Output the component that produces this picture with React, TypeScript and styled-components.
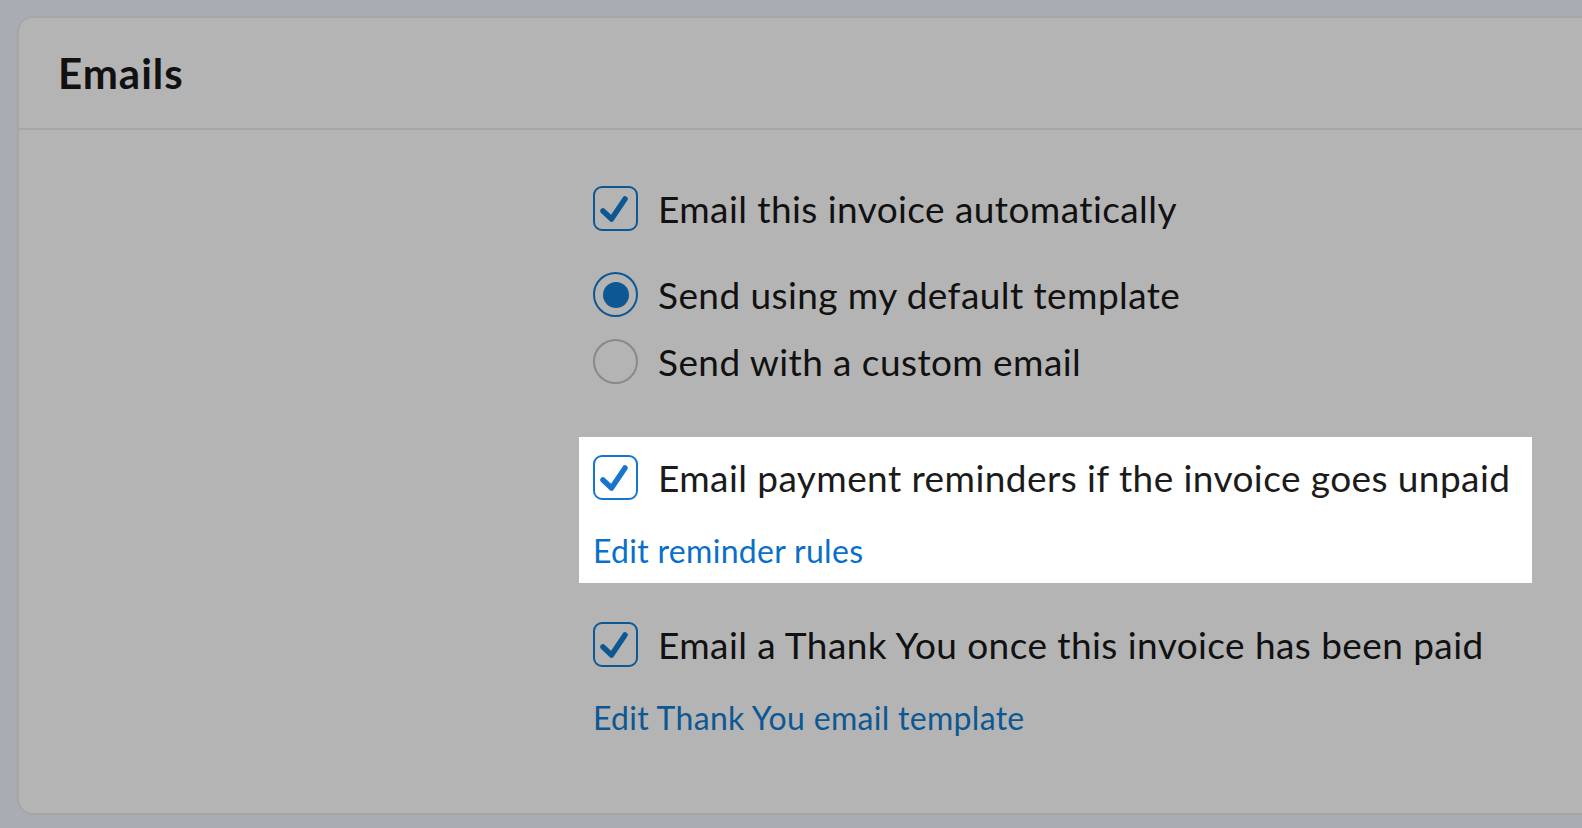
import React from 'react';
import styled, { createGlobalStyle } from 'styled-components';

const GlobalStyle = createGlobalStyle`
  html, body {
    margin: 0;
    padding: 0;
    background: #a9adb3;
    overflow: hidden;
  }
  body {
    font-family: Lato, "Noto Sans", sans-serif;
    color: #111;
  }
`;

const Page = styled.div`
  width: 1582px;
  height: 828px;
  padding: 16px 0 0 17px;
  box-sizing: border-box;
  overflow: hidden;
`;

const Card = styled.section`
  width: 1620px;
  background: #b4b4b4;
  border: 2px solid #a6a6a9;
  border-radius: 16px;
  box-sizing: border-box;
`;

const CardHeader = styled.header`
  height: 112px;
  display: flex;
  align-items: center;
  padding-left: 39px;
  border-bottom: 2px solid #a6a6a9;
  box-sizing: border-box;
`;

const Title = styled.h2`
  margin: 0;
  font-size: 42px;
  font-weight: 700;
  color: #111;
  letter-spacing: 1px;
`;

const CardBody = styled.div`
  padding: 56px 0 75px 574px;
`;

const Group = styled.div<{ $gap?: number; $top?: number }>`
  display: flex;
  flex-direction: column;
  gap: ${(p) => p.$gap ?? 0}px;
  margin-top: ${(p) => p.$top ?? 0}px;
`;

const Highlight = styled.div<{ $active?: boolean }>`
  width: 953px;
  box-sizing: border-box;
  padding: 18px 14px 12px;
  margin-left: -14px;
  background: ${(p) => (p.$active ? '#ffffff' : 'transparent')};
`;

const Row = styled.label<{ $ink?: string }>`
  display: flex;
  align-items: center;
  gap: 20px;
  height: 45px;
  font-size: 37px;
  line-height: 45px;
  letter-spacing: 0.42px;
  color: ${(p) => p.$ink ?? '#111'};
  white-space: nowrap;
`;

const Box = styled.span<{ $color: string }>`
  width: 45px;
  height: 45px;
  flex: none;
  box-sizing: border-box;
  border: 2px solid ${(p) => p.$color};
  border-radius: 9px;
  display: flex;
  align-items: center;
  justify-content: center;

  svg {
    margin: -2px;
  }
`;

const Radio = styled.span<{ $color: string; $on?: boolean }>`
  width: 45px;
  height: 45px;
  flex: none;
  box-sizing: border-box;
  border: 2px solid ${(p) => p.$color};
  border-radius: 50%;
  display: flex;
  align-items: center;
  justify-content: center;

  &::after {
    content: '';
    width: 26px;
    height: 26px;
    border-radius: 50%;
    background: ${(p) => (p.$on ? p.$color : 'transparent')};
  }
`;

const Link = styled.a<{ $color: string }>`
  display: block;
  margin-top: 31px;
  font-size: 32px;
  line-height: 40px;
  letter-spacing: 0.3px;
  color: ${(p) => p.$color};
  text-decoration: none;
  white-space: nowrap;
`;

const DIM_BLUE = '#0d5893';
const BRIGHT_BLUE = '#1676cf';
const DIM_GREY = '#86898d';

const Check = ({ color }: { color: string }) => (
  <svg width="45" height="45" viewBox="0 0 45 45">
    <path
      d="M10 25 L18.5 33 L32 13"
      fill="none"
      stroke={color}
      strokeWidth="5.5"
      strokeLinecap="round"
      strokeLinejoin="round"
    />
  </svg>
);

const CheckRow = ({ color, text, ink }: { color: string; text: string; ink?: string }) => (
  <Row $ink={ink}>
    <Box $color={color}>
      <Check color={color} />
    </Box>
    {text}
  </Row>
);

export default function App() {
  return (
    <>
      <GlobalStyle />
      <Page>
        <Card>
          <CardHeader>
            <Title>Emails</Title>
          </CardHeader>
          <CardBody>
            <CheckRow color={DIM_BLUE} text="Email this invoice automatically" />

            <Group $gap={22} $top={41}>
              <Row>
                <Radio $color={DIM_BLUE} $on />
                Send using my default template
              </Row>
              <Row>
                <Radio $color={DIM_GREY} />
                Send with a custom email
              </Row>
            </Group>

            <Group $top={53}>
              <Highlight $active>
                <CheckRow
                  color={BRIGHT_BLUE}
                  ink="#1b1b1b"
                  text="Email payment reminders if the invoice goes unpaid"
                />
                <Link $color="#0a6fca" href="#">
                  Edit reminder rules
                </Link>
              </Highlight>
            </Group>

            <Group $top={39}>
              <CheckRow color={DIM_BLUE} text="Email a Thank You once this invoice has been paid" />
              <Link $color={DIM_BLUE} href="#">
                Edit Thank You email template
              </Link>
            </Group>
          </CardBody>
        </Card>
      </Page>
    </>
  );
}
